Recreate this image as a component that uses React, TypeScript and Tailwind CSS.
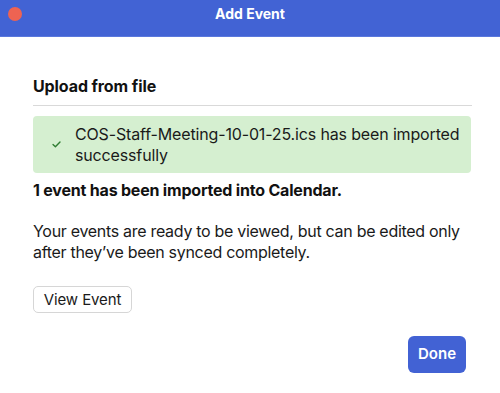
const App = () => {
  return (
    <div
      className="w-[500px] h-[393px] bg-white flex flex-col"
      style={{ fontFamily: "Inter, 'Noto Sans', sans-serif" }}
    >
      {/* title bar */}
      <div className="relative h-[37px] bg-[#4263d4] flex items-center justify-center border-b border-[#5a78dc]">
        <span className="absolute left-[8px] top-[7px] w-[14px] h-[14px] rounded-full bg-[#ee6352]"></span>
        <h1 className="text-white font-bold text-[14px] -mt-[9px]">Add Event</h1>
      </div>

      <div className="px-[33px] pt-[39px] flex flex-col">
        <h2 className="text-[16px] font-bold text-[#111] leading-[20px] tracking-[-0.1px]">
          Upload from file
        </h2>
        <div className="mt-[9px] h-px bg-[#d9d9d9] w-[439px]"></div>

        <div className="mt-[10px] w-[438px] h-[57px] rounded-[4px] bg-[#d5efd0] flex items-center">
          <div className="w-[42px] flex justify-center pl-[4px]">
            <svg width="9" height="7" viewBox="0 0 9 7" fill="none">
              <path d="M1 3.6 L3.4 5.8 L8 1" stroke="#2f7d32" strokeWidth="1.4" strokeLinecap="round" strokeLinejoin="round" />
            </svg>
          </div>
          <p className="text-[16px] leading-[21px] text-[#1a1a1a] tracking-[-0.15px] whitespace-nowrap">
            COS-Staff-Meeting-10-01-25.ics has been imported
            <br />
            successfully
          </p>
        </div>

        <p className="mt-[7px] text-[16px] font-bold text-[#111] leading-[20px] tracking-[-0.2px]">
          1 event has been imported into Calendar.
        </p>

        <p className="mt-[21px] text-[16px] leading-[21px] text-[#1a1a1a] tracking-[-0.3px] whitespace-nowrap">
          Your events are ready to be viewed, but can be edited only
          <br />
          after they’ve been synced completely.
        </p>

        <div className="mt-[23px]">
          <button className="h-[27px] w-[99px] rounded-[5px] border border-[#d6d6d6] bg-white text-[15px] text-[#1a1a1a] leading-none tracking-[-0.1px]">
            View Event
          </button>
        </div>

        <div className="flex justify-end mt-[23px] pr-[1px]">
          <button className="w-[58px] h-[37px] rounded-[6px] bg-[#4262d4] text-white text-[15px] font-semibold">
            Done
          </button>
        </div>
      </div>
    </div>
  );
};

export default App;
